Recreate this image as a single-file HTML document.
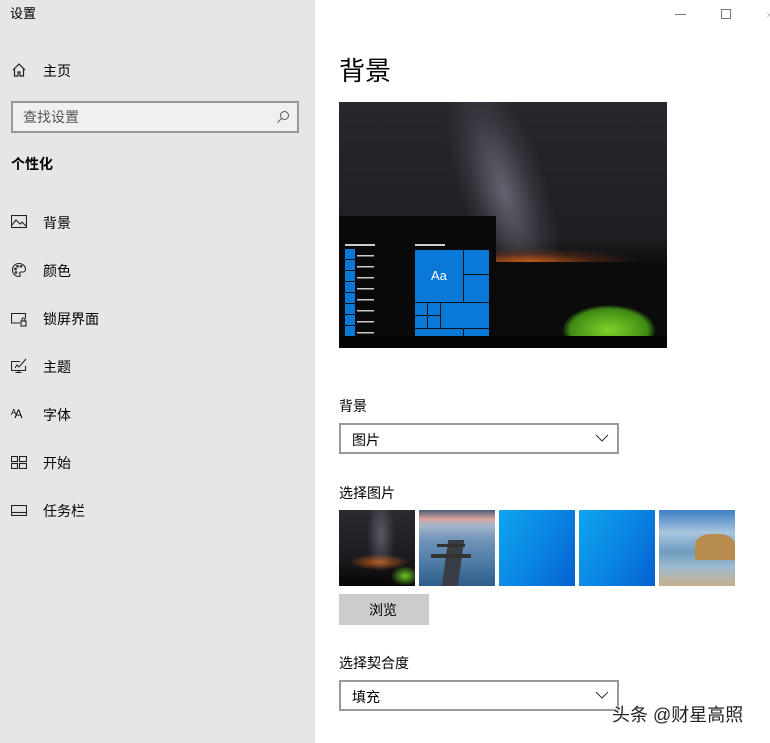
<!DOCTYPE html>
<html><head><meta charset="utf-8"><style>
*{margin:0;padding:0;box-sizing:border-box}
body{width:770px;height:743px;overflow:hidden;background:#fff;font-family:"Liberation Sans","Noto Sans CJK SC",sans-serif;color:#000;position:relative}
.side{position:absolute;left:0;top:0;width:315px;height:743px;background:#e6e6e6}
.a{position:absolute;font-size:14px;line-height:16px}
.ic{position:absolute;left:11px}
.thumb{position:absolute;top:510px;width:76px;height:76px;overflow:hidden}
.dd{position:absolute;left:339px;width:280px;height:31px;border:2px solid #999;background:#fff}
.dd span{position:absolute;left:11px;top:5px;font-size:14px}
.dd svg{position:absolute;right:8px;top:9px}
</style></head><body>
<div class="side">
<div class="a" style="left:10px;top:6px;font-size:13px">设置</div>
<svg class="ic" style="top:62px" width="16" height="16" viewBox="0 0 16 16" fill="none" stroke="#222" stroke-width="1.2"><path d="M2 8L8 2l6 6M3.5 7v7h3.5v-4h2v4h3.5V7"/></svg>
<div class="a" style="left:43px;top:63px">主页</div>
<div style="position:absolute;left:11px;top:101px;width:288px;height:32px;border:2px solid #999;background:#f0f0f0"></div>
<div class="a" style="left:23px;top:109px;color:#555">查找设置</div>
<svg style="position:absolute;left:276px;top:110px" width="14" height="14" viewBox="0 0 14 14" fill="none" stroke="#555" stroke-width="1"><circle cx="8.5" cy="5.5" r="4"/><path d="M5.5 8.5L1.5 12.5"/></svg>
<div class="a" style="left:11px;top:156px;font-weight:bold">个性化</div>
<svg class="ic" style="top:215px" width="16" height="14" viewBox="0 0 16 14" fill="none" stroke="#222" stroke-width="1.1"><rect x="0.5" y="0.5" width="15" height="12"/><path d="M1 10l4-5 4 4 2-2 4 4"/></svg>
<div class="a" style="left:43px;top:215px">背景</div>
<svg class="ic" style="top:262px" width="16" height="16" viewBox="0 0 16 16" fill="none" stroke="#222" stroke-width="1.1"><path d="M8 1.5a6.5 6.5 0 1 0 0 13c1.5 0 1.5-1.5 .8-2.3-.8-.9 0-2.2 1.2-2.2h2a2.5 2.5 0 0 0 2.5-2.5C14.5 4 11.5 1.5 8 1.5z"/><circle cx="4.5" cy="7" r=".8"/><circle cx="6.5" cy="4.3" r=".8"/><circle cx="10" cy="4.3" r=".8"/><circle cx="5" cy="10.5" r=".8"/></svg>
<div class="a" style="left:43px;top:263px">颜色</div>
<svg class="ic" style="top:311px" width="16" height="16" viewBox="0 0 16 16" fill="none" stroke="#222" stroke-width="1.1"><path d="M9 12H.5V2.5h14V7"/><rect x="10" y="10" width="5" height="5"/><path d="M11 10V8.5a1.5 1.5 0 0 1 3 0V10"/></svg>
<div class="a" style="left:43px;top:311px">锁屏界面</div>
<svg class="ic" style="top:358px" width="16" height="16" viewBox="0 0 16 16" fill="none" stroke="#222" stroke-width="1.1"><path d="M9 3.5H.5v9h14V8M7.5 12.5v2M4.5 14.5h6M4 10l2-3 2 2 7-8"/></svg>
<div class="a" style="left:43px;top:359px">主题</div>
<div class="a" style="left:11px;top:406px;font-size:12px;letter-spacing:-2px">ᴬA</div>
<div class="a" style="left:43px;top:407px">字体</div>
<svg class="ic" style="top:456px" width="16" height="13" viewBox="0 0 16 13" fill="none" stroke="#222" stroke-width="1.1"><rect x=".5" y=".5" width="6" height="5"/><rect x="8.5" y=".5" width="7" height="5"/><rect x=".5" y="7.5" width="6" height="5"/><rect x="8.5" y="7.5" width="7" height="5"/></svg>
<div class="a" style="left:43px;top:455px">开始</div>
<svg class="ic" style="top:505px" width="16" height="11" viewBox="0 0 16 11" fill="none" stroke="#222" stroke-width="1.1"><rect x=".5" y=".5" width="15" height="10"/><path d="M1 7.5h14"/></svg>
<div class="a" style="left:43px;top:503px">任务栏</div>
</div>

<div style="position:absolute;left:675px;top:14px;width:11px;height:1px;background:#777"></div>
<div style="position:absolute;left:721px;top:9px;width:10px;height:10px;border:1px solid #777"></div>
<div style="position:absolute;left:766px;top:8px;width:4px;height:12px;color:#bbb;font-size:12px;overflow:hidden">×</div>

<div class="a" style="left:339px;top:56px;font-size:26px;line-height:30px">背景</div>

<div style="position:absolute;left:339px;top:102px;width:328px;height:246px;overflow:hidden;background:linear-gradient(#26282d,#1e1f23 55%,#111 64%,#070707)">
 <div style="position:absolute;left:120px;top:-40px;width:90px;height:260px;transform:rotate(-18deg);background:radial-gradient(ellipse at center,rgba(160,150,170,.55),rgba(120,110,130,.2) 45%,transparent 70%)"></div>
 <div style="position:absolute;left:100px;top:140px;width:228px;height:40px;background:radial-gradient(ellipse 110px 14px at 90px 20px,#c05a1a,rgba(120,50,20,.4) 60%,transparent)"></div>
 <div style="position:absolute;left:150px;top:160px;width:178px;height:80px;background:#0b0b0c"></div>
 <div style="position:absolute;left:205px;top:183px;width:125px;height:55px;background:radial-gradient(ellipse 65px 35px at 65px 45px,#7fd32a,#3f8a14 60%,transparent 72%)"></div>
 <div style="position:absolute;left:0;top:114px;width:157px;height:132px;background:#090909"></div>
 <div style="position:absolute;left:0;top:234px;width:328px;height:12px;background:#050505"></div>
 <div style="position:absolute;left:6px;top:142px;width:30px;height:2px;background:#ccc"></div>
 <div style="position:absolute;left:76px;top:142px;width:30px;height:2px;background:#ccc"></div>
 <div style="position:absolute;left:6px;top:147px;width:10px;height:87px;background:repeating-linear-gradient(#0a78d7 0 10px,#111 10px 11px)"></div>
 <div style="position:absolute;left:18px;top:153px;width:17px;height:80px;background:repeating-linear-gradient(#ccc 0 1.5px,transparent 1.5px 11px)"></div>
 <div style="position:absolute;left:76px;top:148px;width:74px;height:86px;background:#0a78d7"></div>
 <div style="position:absolute;left:124px;top:148px;width:1px;height:52px;background:#111"></div>
 <div style="position:absolute;left:124px;top:172px;width:26px;height:1px;background:#111"></div>
 <div style="position:absolute;left:76px;top:200px;width:74px;height:1px;background:#111"></div>
 <div style="position:absolute;left:76px;top:226px;width:74px;height:1px;background:#111"></div>
 <div style="position:absolute;left:101px;top:200px;width:1px;height:26px;background:#111"></div>
 <div style="position:absolute;left:88px;top:200px;width:1px;height:26px;background:#111"></div>
 <div style="position:absolute;left:76px;top:213px;width:25px;height:1px;background:#111"></div>
 <div style="position:absolute;left:124px;top:226px;width:1px;height:8px;background:#111"></div>
 <div style="position:absolute;left:92px;top:166px;font-size:13px;color:#fff">Aa</div>
</div>

<div class="a" style="left:339px;top:398px">背景</div>
<div class="dd" style="top:423px"><span>图片</span><svg width="14" height="8" viewBox="0 0 14 8" fill="none" stroke="#333"><path d="M1 1l6 6 6-6"/></svg></div>

<div class="a" style="left:339px;top:485px">选择图片</div>
<div class="thumb" style="left:339px;background:radial-gradient(ellipse 14px 40px at 42px 25px,rgba(150,140,160,.5),transparent),radial-gradient(ellipse 30px 8px at 40px 52px,#b8561a,transparent),radial-gradient(ellipse 14px 10px at 66px 66px,#6cc423,transparent),linear-gradient(#2a2b30,#1b1c20 62%,#060606)"></div>
<div class="thumb" style="left:419px;background:linear-gradient(#4a5a78,#d9a49a 12%,#a7b5cc 20%,#6f93b8 40%,#4d7ba6 70%,#2d5d88);"><div style="position:absolute;left:26px;top:30px;width:16px;height:46px;background:#3a3d44;transform:skewX(-8deg)"></div><div style="position:absolute;left:12px;top:44px;width:40px;height:4px;background:#333"></div><div style="position:absolute;left:18px;top:34px;width:28px;height:3px;background:#333"></div></div>
<div class="thumb" style="left:499px;background:linear-gradient(120deg,#0ea5ee,#0a7fe0 60%,#0560cf)"></div>
<div class="thumb" style="left:579px;background:linear-gradient(120deg,#0ea5ee,#0a7fe0 60%,#0560cf)"></div>
<div class="thumb" style="left:659px;background:linear-gradient(#3e7fc4,#a9c6de 30%,#6f9cc0 55%,#9fbbd0 75%,#c8b08c)"><div style="position:absolute;left:36px;top:24px;width:40px;height:26px;background:#b88c4c;border-radius:40% 40% 0 0"></div></div>
<div style="position:absolute;left:339px;top:594px;width:90px;height:31px;background:#ccc"></div>
<div class="a" style="left:369px;top:602px">浏览</div>

<div class="a" style="left:339px;top:655px">选择契合度</div>
<div class="dd" style="top:680px"><span>填充</span><svg width="14" height="8" viewBox="0 0 14 8" fill="none" stroke="#333"><path d="M1 1l6 6 6-6"/></svg></div>

<div class="a" style="left:612px;top:705px;font-size:18px;line-height:21px;color:#222;text-shadow:0 0 2px #fff,0 0 2px #fff">头条 @财星高照</div>
</body></html>
